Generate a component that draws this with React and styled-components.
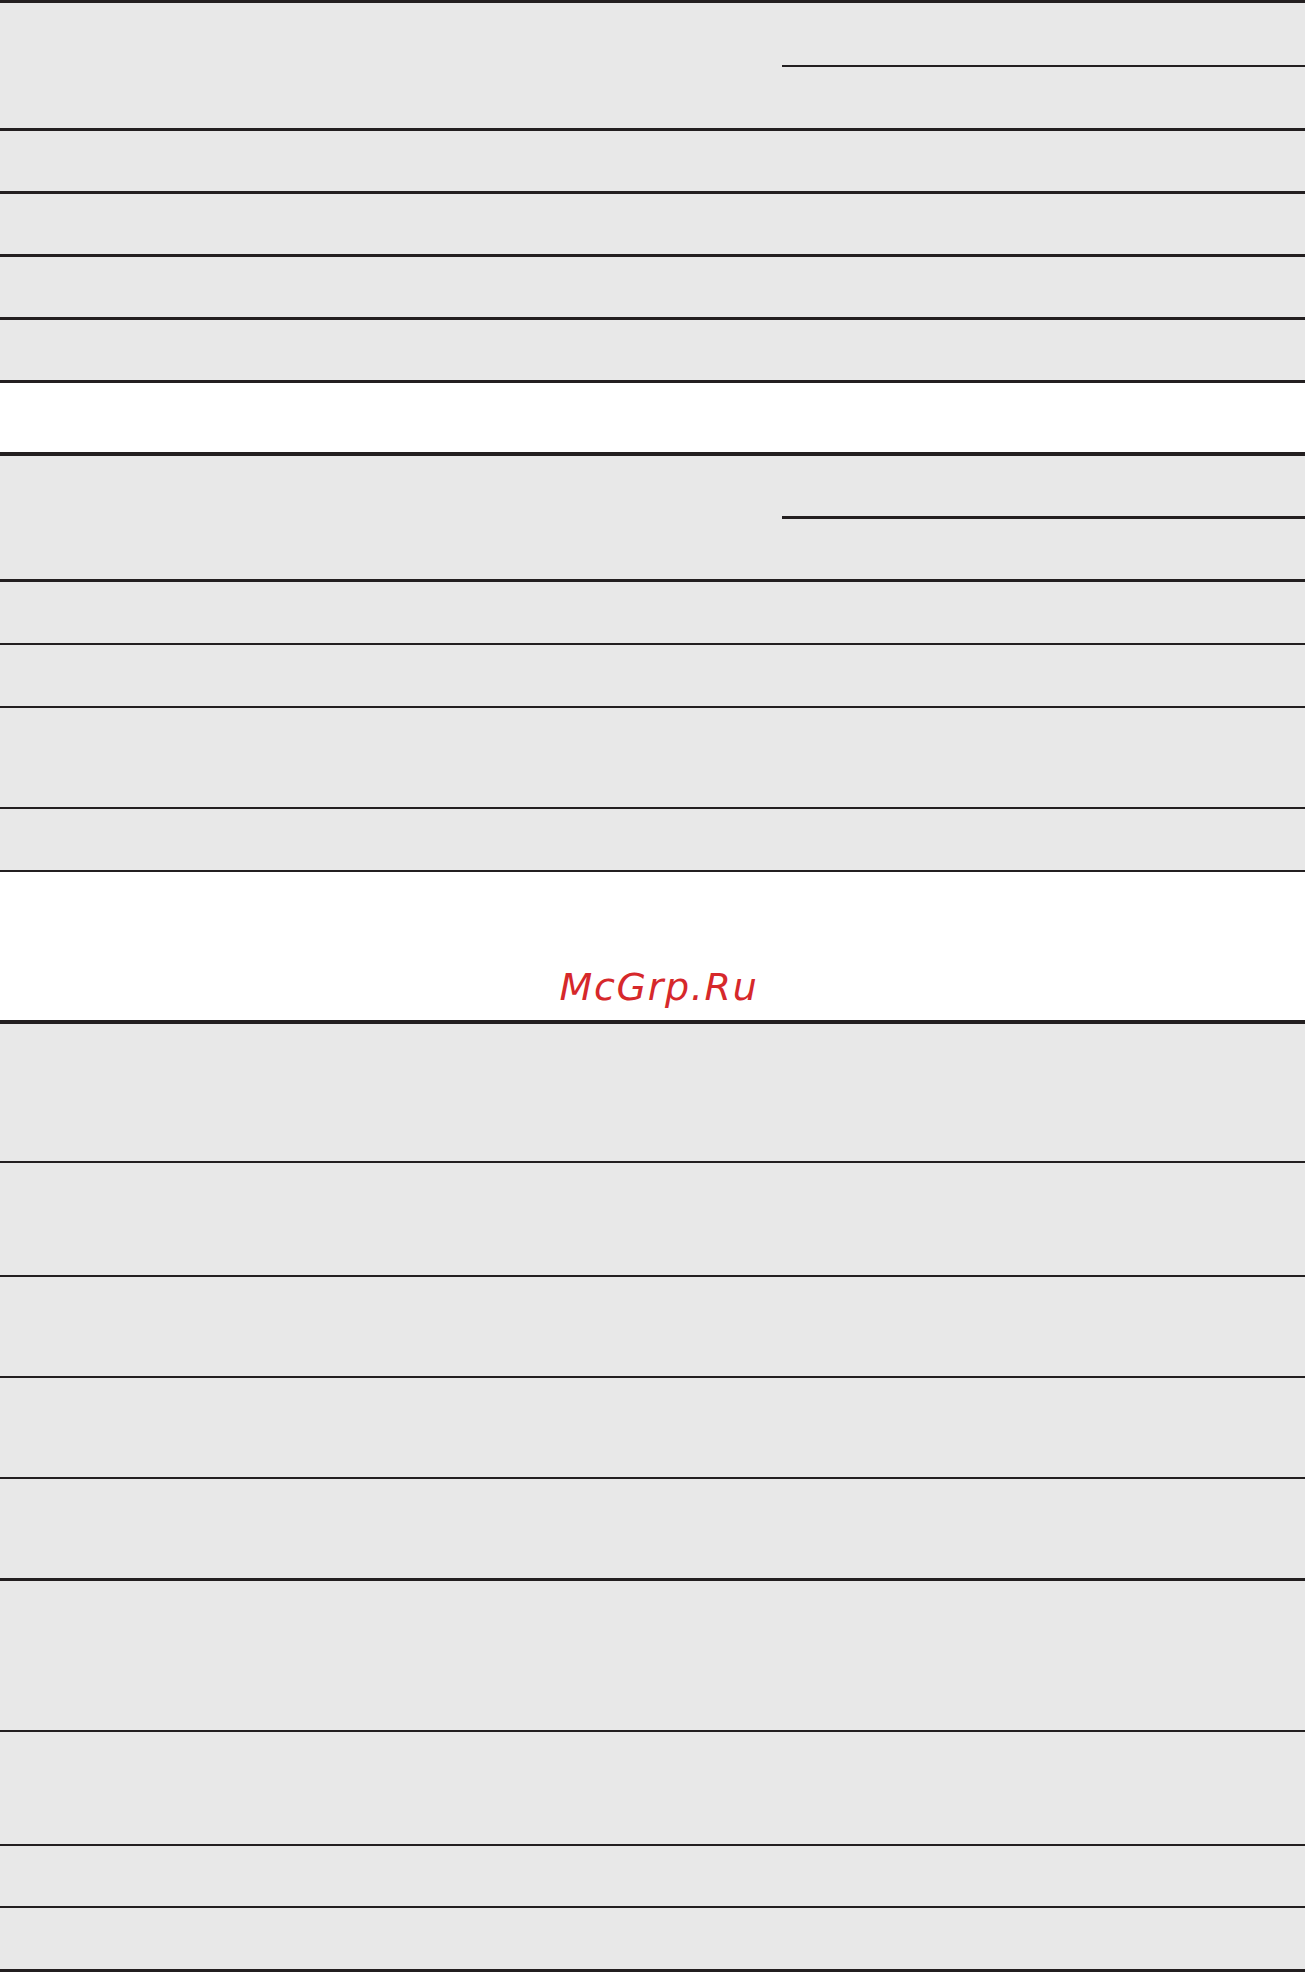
import React from 'react';
import styled, { createGlobalStyle } from 'styled-components';

/* ────────── Global ────────── */
const Global = createGlobalStyle`
  html, body { margin: 0; padding: 0; background: #ffffff; }
  body { font-family: "DejaVu Sans", "Liberation Sans", sans-serif; }
`;

const INK = '#231f20';
const FILL = '#e8e8e8';

/* ────────── Styled Components ────────── */
const Page = styled.div`
  width: 1305px;
  display: flex;
  flex-direction: column;
`;

const Table = styled.div`
  background: ${FILL};
  border-top: ${({ $top }) => $top}px solid ${INK};
  display: flex;
  flex-direction: column;
`;

const Row = styled.div`
  height: ${({ $h }) => $h}px;
  border-bottom: ${({ $rule }) => $rule}px solid ${INK};
`;

const SplitRow = styled.div`
  display: grid;
  grid-template-columns: 782px 1fr;
  border-bottom: ${({ $rule }) => $rule}px solid ${INK};
`;

const Cell = styled.div`
  display: flex;
  flex-direction: column;
`;

const SubCell = styled.div`
  height: ${({ $h }) => $h}px;
  border-bottom: ${({ $rule = 0 }) => $rule}px solid ${INK};
`;

const Gap = styled.div`
  height: ${({ $h }) => $h}px;
`;

const Watermark = styled.div`
  height: 148px;
  box-sizing: border-box;
  padding-top: 96px;
  padding-left: 13px;
  text-align: center;
`;

const Mark = styled.span`
  font-family: "DejaVu Sans", sans-serif;
  font-style: oblique;
  font-size: 38px;
  line-height: 38px;
  letter-spacing: 1.7px;
  color: #d6282b;
`;

/* ────────── Component ────────── */
export default function App() {
  return (
    <>
      <Global />
      <Page>
        <Table $top={3}>
          <SplitRow $rule={3}>
            <Cell />
            <Cell>
              <SubCell $h={62} $rule={2} />
              <SubCell $h={61} />
            </Cell>
          </SplitRow>
          {[60, 60, 60, 60].map((h, i) => (
            <Row key={i} $h={h} $rule={3} />
          ))}
        </Table>

        <Gap $h={69} />

        <Table $top={4}>
          <SplitRow $rule={3}>
            <Cell />
            <Cell>
              <SubCell $h={60} $rule={3} />
              <SubCell $h={60} />
            </Cell>
          </SplitRow>
          {[61, 61, 99, 61].map((h, i) => (
            <Row key={i} $h={h} $rule={2} />
          ))}
        </Table>

        <Watermark>
          <Mark>McGrp.Ru</Mark>
        </Watermark>

        <Table $top={4}>
          {[
            [137, 2], [112, 2], [99, 2], [99, 2], [99, 3],
            [149, 2], [112, 2], [60, 2], [61, 3],
          ].map(([h, r], i) => (
            <Row key={i} $h={h} $rule={r} />
          ))}
        </Table>
      </Page>
    </>
  );
}
